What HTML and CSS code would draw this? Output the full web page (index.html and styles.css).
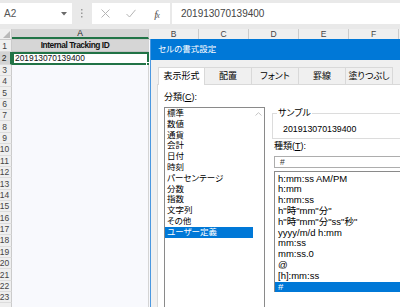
FILE: index.html
```html
<!DOCTYPE html>
<html lang="ja">
<head>
<meta charset="utf-8">
<title>セルの書式設定</title>
<link rel="stylesheet" href="styles.css">
</head>
<body>
<div class="app">
  <div class="toolbar">
    <div class="namebox"><span class="ref">A2</span><svg class="caret" width="6" height="4" viewBox="0 0 6 4"><path d="M0 0H6L3 3.5Z" fill="#6a6a6a"/></svg></div>
    <div class="grip"><svg width="2" height="9" viewBox="0 0 2 9"><rect x="0" y="0" width="1.5" height="1.5" fill="#9a9a9a"/><rect x="0" y="3.5" width="1.5" height="1.5" fill="#9a9a9a"/><rect x="0" y="7" width="1.5" height="1.5" fill="#9a9a9a"/></svg></div>
    <div class="fbtns">
      <span class="fbtn"><svg width="9" height="9" viewBox="0 0 9 9"><path d="M0.5 0.5L8.5 8.5M8.5 0.5L0.5 8.5" stroke="#b4b4b4" stroke-width="1" fill="none"/></svg></span>
      <span class="fbtn"><svg width="10" height="9" viewBox="0 0 10 9"><path d="M0.5 5L3.5 8L9.5 0.8" stroke="#b4b4b4" stroke-width="1" fill="none"/></svg></span>
      <span class="fbtn fx"><i>f</i><span class="fxx">x</span></span>
    </div>
    <div class="finput">201913070139400</div>
  </div>

  <div class="colheads">
    <div class="corner"><svg width="7" height="7" viewBox="0 0 7 7"><path d="M7 0V7H0Z" fill="#b9b9b9"/></svg></div>
    <div class="ch cha">A</div>
    <div class="ch">B</div>
    <div class="ch">C</div>
    <div class="ch">D</div>
    <div class="ch">E</div>
    <div class="ch">F</div>
  </div>

  <div class="rows">
    <div class="row r1"><div class="rh">1</div><div class="cell head">Internal Tracking ID</div></div>
    <div class="row r2"><div class="rh rhsel">2</div><div class="cell active">201913070139400<span class="handle"></span></div></div>
    <div class="row"><div class="rh">3</div><div class="cell"></div></div>
    <div class="row"><div class="rh">4</div><div class="cell"></div></div>
    <div class="row"><div class="rh">5</div><div class="cell"></div></div>
    <div class="row"><div class="rh">6</div><div class="cell"></div></div>
    <div class="row"><div class="rh">7</div><div class="cell"></div></div>
    <div class="row"><div class="rh">8</div><div class="cell"></div></div>
    <div class="row"><div class="rh">9</div><div class="cell"></div></div>
    <div class="row"><div class="rh">10</div><div class="cell"></div></div>
    <div class="row"><div class="rh">11</div><div class="cell"></div></div>
    <div class="row"><div class="rh">12</div><div class="cell"></div></div>
    <div class="row"><div class="rh">13</div><div class="cell"></div></div>
    <div class="row"><div class="rh">14</div><div class="cell"></div></div>
    <div class="row"><div class="rh">15</div><div class="cell"></div></div>
    <div class="row"><div class="rh">16</div><div class="cell"></div></div>
    <div class="row"><div class="rh">17</div><div class="cell"></div></div>
    <div class="row"><div class="rh">18</div><div class="cell"></div></div>
    <div class="row"><div class="rh">19</div><div class="cell"></div></div>
    <div class="row"><div class="rh">20</div><div class="cell"></div></div>
    <div class="row"><div class="rh">21</div><div class="cell"></div></div>
    <div class="row"><div class="rh">22</div><div class="cell"></div></div>
    <div class="row"><div class="rh">23</div><div class="cell"></div></div>
    <div class="row"><div class="rh"></div><div class="cell"></div></div>
  </div>

  <div class="dialog">
    <div class="title">セルの書式設定</div>
    <div class="dbody">
      <div class="tabs">
        <div class="tab active">表示形式</div>
        <div class="tab">配置</div>
        <div class="tab">フォント</div>
        <div class="tab">罫線</div>
        <div class="tab">塗りつぶし</div>
      </div>
      <div class="panel">
        <div class="lcol">
          <div class="lbl">分類(<u>C</u>):</div>
          <div class="catlist">
            <div class="items">
              <div class="item">標準</div>
              <div class="item">数値</div>
              <div class="item">通貨</div>
              <div class="item">会計</div>
              <div class="item">日付</div>
              <div class="item">時刻</div>
              <div class="item">パーセンテージ</div>
              <div class="item">分数</div>
              <div class="item">指数</div>
              <div class="item">文字列</div>
              <div class="item">その他</div>
              <div class="item sel">ユーザー定義</div>
            </div>
            <div class="vscroll">
              <svg width="7" height="4" viewBox="0 0 7 4"><path d="M0.5 3.5L3.5 0.7L6.5 3.5" stroke="#c4c4c4" fill="none"/></svg>
              <svg width="7" height="4" viewBox="0 0 7 4"><path d="M0.5 0.5L3.5 3.3L6.5 0.5" stroke="#c4c4c4" fill="none"/></svg>
            </div>
          </div>
        </div>
        <div class="rcol">
          <fieldset class="sample">
            <legend>サンプル</legend>
            <div class="sval">201913070139400</div>
          </fieldset>
          <div class="lbl kind">種類(<u>T</u>):</div>
          <div class="finp">#</div>
          <div class="fmtlist">
            <div class="fitem">h:mm:ss AM/PM</div>
            <div class="fitem">h:mm</div>
            <div class="fitem">h:mm:ss</div>
            <div class="fitem">h"時"mm"分"</div>
            <div class="fitem">h"時"mm"分"ss"秒"</div>
            <div class="fitem">yyyy/m/d h:mm</div>
            <div class="fitem">mm:ss</div>
            <div class="fitem">mm:ss.0</div>
            <div class="fitem">@</div>
            <div class="fitem">[h]:mm:ss</div>
            <div class="fitem sel">#</div>
          </div>
        </div>
      </div>
    </div>
  </div>
</div>
</body>
</html>
```

FILE: styles.css
```css
* { box-sizing: border-box; margin: 0; padding: 0; }
html, body { width: 400px; height: 307px; overflow: hidden; background: #fff; }
body {
  font-family: "Liberation Sans", "Noto Sans CJK JP", sans-serif;
  color: #000;
}
.app {
  position: relative;
  width: 400px;
  height: 307px;
  overflow: hidden;
  background: #f8f9fd;
}

/* formula bar */
.toolbar {
  display: flex;
  height: 29px;
  padding: 3px 0 5px 0;
  background: #e9e9e9;
}
.namebox {
  width: 72px;
  background: #fff;
  display: flex;
  align-items: center;
  justify-content: space-between;
  padding: 0 5px 0 4px;
  font-size: 10px;
  color: #555;
}
.grip {
  width: 20px;
  display: flex;
  align-items: center;
  justify-content: center;
}
.fbtns {
  width: 78px;
  background: #fff;
  display: flex;
}
.fbtn {
  width: 26px;
  display: flex;
  align-items: center;
  justify-content: center;
}
.fx {
  font-family: "Liberation Serif", serif;
  font-size: 11px;
  color: #555;
}
.fx i { font-style: italic; }
.fxx { font-size: 8px; font-style: italic; margin-top: 3px; margin-left: -1px; }
.finput {
  flex: 1;
  margin-left: 2px;
  background: #fff;
  display: flex;
  align-items: center;
  padding-left: 9px;
  font-size: 10px;
  color: #444;
}

/* column headers */
.colheads {
  display: flex;
  height: 11px;
  background: #efefef;
  border-bottom: 1px solid #cbcbcb;
}
.corner {
  width: 12px;
  border-right: 1px solid #cbcbcb;
  display: flex;
  align-items: flex-end;
  justify-content: flex-end;
  padding: 0 1px 1px 0;
}
.ch {
  width: 50px;
  flex: none;
  border-right: 1px solid #cbcbcb;
  font-size: 8.5px;
  line-height: 10px;
  text-align: center;
  color: #444;
}
.cha {
  width: 137px;
  background: #d3d3d3;
  border-bottom: 2px solid #217346;
  color: #222;
  line-height: 9px;
}

/* rows */
.row { display: flex; height: 11.38px; }
.row.r1 { height: 12px; }
.row.r2 { height: 12.6px; }
.rh {
  width: 12px;
  flex: none;
  background: #efefef;
  border-right: 1px solid #cbcbcb;
  border-bottom: 1px solid #dcdcdc;
  font-size: 8.5px;
  color: #444;
  text-align: center;
  padding-right: 2px;
  display: flex;
  align-items: center;
  justify-content: center;
}
.rhsel { background: #d3d3d3; border-right: 2px solid #217346; color: #222; }
.cell {
  width: 137px;
  flex: none;
  border-right: 1px solid #d4d4d4;
  position: relative;
}
.cell.head {
  background: #d6d6d6;
  border-bottom: 1px solid #c4c4c4;
  font-weight: bold;
  font-size: 8.4px;
  letter-spacing: -0.45px;
  text-align: center;
  line-height: 11px;
  padding-right: 10px;
  color: #111;
}
.cell.active {
  background: #fff;
  border: 2px solid #217346;
  font-size: 8.4px;
  line-height: 8.6px;
  padding-left: 1px;
  color: #111;
}
.handle {
  position: absolute;
  right: -3px;
  bottom: -3px;
  width: 4px;
  height: 4px;
  background: #217346;
  border: 1px solid #fff;
}

/* dialog */
.dialog {
  position: absolute;
  left: 150px;
  top: 39px;
  width: 262px;
  height: 280px;
  background: #f0f0f0;
  border-left: 1px solid #4b98e0;
  display: flex;
  flex-direction: column;
  font-feature-settings: "palt";
}
.title {
  height: 21px;
  background: #0078d7;
  color: #fff;
  font-size: 8.5px;
  line-height: 21px;
  padding-left: 7px;
}
.dbody {
  flex: 1;
  padding: 7px 0 0 6px;
  display: flex;
  flex-direction: column;
}
.tabs {
  display: flex;
  align-items: flex-start;
  height: 17px;
  padding-left: 1px;
  position: relative;
  z-index: 1;
}
.tab {
  width: 47px;
  height: 17px;
  flex: none;
  background: #f0f0f0;
  border: 1px solid #d9d9d9;
  border-left: none;
  border-bottom: none;
  font-size: 9px;
  line-height: 16px;
  text-align: center;
}
.tab.active {
  background: #fff;
  border-left: 1px solid #d9d9d9;
  height: 18px;
}
.panel {
  flex: 1;
  background: #fff;
  border: 1px solid #d9d9d9;
  display: flex;
  padding: 6px 0 0 6px;
}
.lcol { width: 101px; flex: none; display: flex; flex-direction: column; }
.lbl { font-size: 9px; line-height: 13px; height: 13px; }
.lcol .lbl { margin-bottom: 3px; }
.catlist {
  height: 210px;
  border: 1px solid #8a8a8a;
  display: flex;
  background: #fff;
}
.items { flex: 1; }
.item {
  height: 10.8px;
  line-height: 10.8px;
  font-size: 8.5px;
  padding-left: 2px;
  white-space: nowrap;
}
.item.sel { background: #0078d7; color: #fff; }
.vscroll {
  width: 11px;
  display: flex;
  flex-direction: column;
  justify-content: space-between;
  align-items: center;
  padding: 4px 0 4px 0;
}

.rcol {
  width: 140px;
  flex: none;
  margin-left: 7px;
  display: flex;
  flex-direction: column;
}
.sample {
  margin-top: 16px;
  border: 1px solid #dcdcdc;
  padding: 4px 0 3px 10px;
}
.sample legend {
  font-size: 9px;
  line-height: 12px;
  margin-left: -6px;
  padding: 0 1px;
}
.sval { font-size: 8.8px; line-height: 12px; }
.kind { margin-top: 1px; margin-left: 2px; line-height: 12px; height: 12px; }
.finp {
  margin-top: 4px;
  margin-left: 2px;
  height: 12px;
  border: 1px solid #adadad;
  font-size: 8.5px;
  line-height: 10px;
  padding-left: 5px;
  color: #333;
}
.fmtlist {
  margin-top: 3px;
  margin-left: 2px;
  height: 121px;
  border: 1px solid #8a8a8a;
  padding-top: 1.6px;
}
.fitem {
  height: 10.8px;
  line-height: 10.8px;
  font-size: 9.5px;
  padding-left: 3px;
  white-space: nowrap;
}
.fitem.sel { background: #0078d7; color: #fff; }
```
